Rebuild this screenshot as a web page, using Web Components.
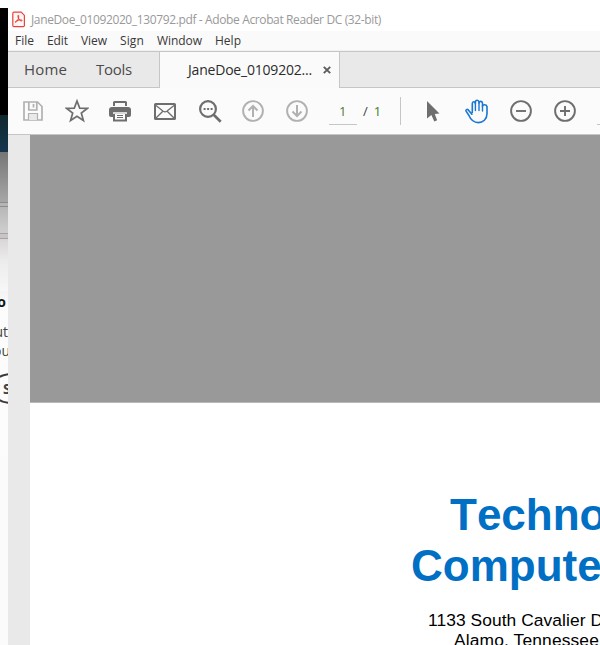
<!DOCTYPE html>
<html lang="en"><head><meta charset="utf-8"><title>Acrobat Reader</title>
<style>html,body{margin:0;height:645px;overflow:hidden;background:#fff}body{font-family:"Open Sans","Noto Sans",sans-serif}</style></head>
<body>
<reader-desktop></reader-desktop>
<script>
const define=(name,html,after)=>{
  const t=document.createElement('template');t.innerHTML=html;
  customElements.define(name,class extends HTMLElement{
    connectedCallback(){
      if(this.shadowRoot)return;
      this.attachShadow({mode:'open'}).append(t.content.cloneNode(true));
      if(after)after(this,this.shadowRoot);
    }
  });
};

/* One line of text tracked to a given advance width. */
define('fit-text',`<style>:host{display:block;white-space:pre;flex:none}span{display:inline-block}</style><span><slot></slot></span>`,(el,root)=>{
  const w=+el.getAttribute('w'),s=root.querySelector('span');
  el.style.width=w+'px';
  const n=el.textContent.length,natural=s.getBoundingClientRect().width;
  s.style.letterSpacing=((w-natural)/n)+'px';
});

const icons={
 pdf:`<svg width="14" height="18" viewBox="0 0 14 18" fill="none"><path d="M2 1.200h7.200l3.200 3.200v10.100q0 1.200-1.200 1.200H2Q.8 15.700.8 14.500V2.400Q.8 1.200 2 1.200z" fill="#fff6f5" stroke="#e9423a" stroke-width="1.200"/><path d="M6.400 4.200c-.8 0-.6 1.600.2 3.200.9 1.900 2.600 2.900 3.400 2.500.7-.5-.6-1.300-2.800-.9-2.200.2-4 1.300-3.900 2.100.3.900 1.900-.7 2.600-2.300.8-1.800 1.200-4.500.5-4.600z" stroke="#e8352c" stroke-width="1"/></svg>`,
 save:`<svg width="20" height="20" viewBox="0 0 20 20" fill="none" stroke="#b1b1b1" stroke-width="1.700"><path d="M1 1h13.500L19 5.500V19H1z"/><path d="M5.800 1v8h8V1M10.500 3v3.500"/><path d="M5.500 19v-6.500h9V19" fill="#e9e9e9" stroke-width="1.200"/></svg>`,
 star:`<svg width="24" height="24" viewBox="0 0 24 24" fill="none" stroke="#6e6e6e" stroke-width="1.700"><path d="M12 2l2.700 7.100 7.600.3-6 4.700 2.100 7.400L12 17.300l-6.400 4.200 2.100-7.400-6-4.700 7.600-.3z"/></svg>`,
 print:`<svg width="22" height="21" viewBox="0 0 22 21"><path d="M4 5V1.500Q4 0 5.500 0h11Q18 0 18 1.500V5h-2V2H6v3z" fill="#6e6e6e"/><path d="M3 6h16q3 0 3 3v5q0 2-2 2H2q-2 0-2-2V9q0-3 3-3z" fill="#6e6e6e"/><path d="M5 12h12v7.500H5z" fill="#fbfbfb" stroke="#6e6e6e" stroke-width="2"/><path d="M4 11h14v2H4z" fill="#d8d8d8"/><path d="M8 14.500h6M8 16.500h6" stroke="#6e6e6e"/></svg>`,
 mail:`<svg width="22" height="17" viewBox="0 0 22 17" fill="none" stroke="#6e6e6e"><rect x="1" y="1" width="20" height="15" rx=".6" stroke-width="2"/><path d="M2 2.500l7.200 5.800q1.800 1.200 3.600 0L20 2.500M2 15l6.600-6.500M20 15l-6.600-6.500" stroke-width="1.300"/></svg>`,
 find:`<svg width="23" height="23" viewBox="0 0 23 23" fill="none" stroke="#6e6e6e"><circle cx="9" cy="9" r="7.900" stroke-width="2.200"/><path d="M14.700 14.700l7 7" stroke-width="2.700"/><path d="M4.600 9h2m1.500 0h2m1.500 0h2" stroke-width="1.800"/></svg>`,
 up:`<svg width="22" height="22" viewBox="0 0 22 22" fill="none" stroke="#b1b1b1" stroke-width="1.900"><circle cx="11" cy="11" r="9.900"/><path d="M11 17V6M6.500 10.500L11 6l4.500 4.500" stroke-width="2"/></svg>`,
 down:`<svg width="22" height="22" viewBox="0 0 22 22" fill="none" stroke="#b1b1b1" stroke-width="1.900"><circle cx="11" cy="11" r="9.900"/><path d="M11 5v11M6.500 11.500L11 16l4.500-4.500" stroke-width="2"/></svg>`,
 arrow:`<svg width="13" height="21" viewBox="0 0 13 21" fill="#6e6e6e"><path d="M0 0l12.500 12.500-4.700.5 2.300 6.300-2.800 1.200-2.900-6.500L0 17.500z"/></svg>`,
 hand:`<svg width="24" height="25" viewBox="0 0 24 25" fill="none" stroke="#1976d2" stroke-width="1.600" stroke-linecap="round" stroke-linejoin="round"><path d="M7.300 13.500V4.500Q7.300 2.800 8.700 2.800T10.400 4.500V3Q10.400 1.200 12.100 1.200T14 3V4.100Q14 2.400 15.600 2.400T17.500 4.100V7.200Q17.500 5.800 19.500 5.800T22 7.500v7.300c0 5.400-4.100 8.800-8.700 8.800-5.500 0-8.100-4-9.500-7.300L1.100 12.100C.5 10.700 2.100 9.900 3.300 10.900l3.600 4.300"/><path d="M10.400 4.500V11.500M14 4v7.500M17.500 7v5" stroke-width="1.400"/></svg>`,
 minus:`<svg width="22" height="22" viewBox="0 0 22 22" fill="none" stroke="#6e6e6e" stroke-width="1.900"><circle cx="11" cy="11" r="9.900"/><path d="M6 11h10"/></svg>`,
 plus:`<svg width="22" height="22" viewBox="0 0 22 22" fill="none" stroke="#6e6e6e" stroke-width="1.900"><circle cx="11" cy="11" r="9.900"/><path d="M6 11h10M11 6v10"/></svg>`,
 close:`<svg width="8" height="8" viewBox="0 0 8 8" stroke="#5c5c5c" stroke-width="1.900"><path d="M.8.8l6.400 6.400M7.200.8L.8 7.200"/></svg>`
};
define('tool-icon',`<style>:host{display:flex;flex:none;align-items:center;justify-content:center}svg{display:block;flex:none}</style>`,(el,root)=>{
  root.append(document.createRange().createContextualFragment(icons[el.getAttribute('name')]));
});

define('title-bar',`<style>:host{display:flex;height:31px;box-sizing:border-box;padding:11px 0 0 4px;background:#fff;color:#999;font-size:12px;line-height:17px}tool-icon{width:14px;height:18px;margin-right:5px}</style>
<tool-icon name="pdf"></tool-icon><fit-text w="350">JaneDoe_01092020_130792.pdf - Adobe Acrobat Reader DC (32-bit)</fit-text>`);

define('menu-bar',`<style>:host{display:flex;height:20px;box-sizing:border-box;gap:13px;padding:1px 0 0 7px;background:#fafafa;border-bottom:1px solid #f0f0f0;color:#383838;font-size:12px;line-height:18px}</style>
<fit-text w="19">File</fit-text><fit-text w="21">Edit</fit-text><fit-text w="26">View</fit-text><fit-text w="24">Sign</fit-text><fit-text w="45">Window</fit-text><fit-text w="26">Help</fit-text>`);

define('tab-strip',`<style>:host{display:flex;height:37px;box-sizing:border-box;border-top:1px solid #c6c6c6;background:#e9e9e9;color:#4b4b4b;font-size:15px;line-height:34px}
.nav{display:flex;box-sizing:border-box;width:152px;padding-left:16px;gap:29px;border-right:1px solid #c6c6c6;border-bottom:1px solid #c6c6c6}
.tab{display:flex;box-sizing:border-box;width:180px;padding-left:28px;gap:11px;align-items:center;background:#fafafa;color:#2c2c2c;font-size:14px;border-right:1px solid #c6c6c6}
.rest{flex:1;border-bottom:1px solid #c6c6c6}</style>
<div class="nav"><fit-text w="43">Home</fit-text><fit-text w="36">Tools</fit-text></div>
<div class="tab"><fit-text w="124">JaneDoe_0109202...</fit-text><tool-icon name="close"></tool-icon></div><div class="rest"></div>`);

define('tool-bar',`<style>:host{display:flex;height:47px;box-sizing:border-box;padding-left:3px;background:#fbfbfb;border-bottom:1px solid #c6c6c6;overflow:hidden;color:#444;font-size:13px}
tool-icon{width:44px;height:46px}.page{display:flex;flex:none;width:74px;box-sizing:border-box;padding-left:10px}
.field{flex:none;box-sizing:border-box;width:28px;height:37px;padding:14px 0 0 10px;border-bottom:1px solid #c6c6c6;line-height:18px;color:#4f7a35}
.of{display:flex;gap:6px;flex:none;padding:14px 0 0 6px;line-height:18px}.of b{font-weight:400;color:#3d7a33}.rule{flex:none;width:1px;height:28px;margin:9px 10px 0 7px;background:#c6c6c6}
.zoom{flex:none;width:20px;height:37px;box-sizing:border-box;border-bottom:1px solid #c6c6c6;margin-left:10px}
[name=print]{margin:0 1px 0 -1px}[name=find]{margin:0 -1px 0 1px}[name=up]{margin-left:0}</style>
<tool-icon name="save"></tool-icon><tool-icon name="star"></tool-icon><tool-icon name="print"></tool-icon><tool-icon name="mail"></tool-icon><tool-icon name="find"></tool-icon><tool-icon name="up"></tool-icon><tool-icon name="down"></tool-icon>
<div class="page"><div class="field">1</div><div class="of"><span>/</span><b>1</b></div></div><div class="rule"></div>
<tool-icon name="arrow"></tool-icon><tool-icon name="hand"></tool-icon><tool-icon name="minus"></tool-icon><tool-icon name="plus"></tool-icon><div class="zoom"></div>`);

define('document-view',`<style>:host{display:grid;grid-template-columns:22px 1fr;height:510px;overflow:hidden;background:#e9e9e9}
.pane{display:flex;flex-direction:column;background:#999;padding-top:267px;overflow:hidden}
.page{flex:1;background:#fff;border-top:1px solid #b8b8b8;padding-top:86px;font-family:"Liberation Sans",Arial,sans-serif;color:#000}
h1{margin:0;font-size:44px;line-height:51px;color:#006fc4;white-space:pre;font-kerning:none}
h1 span{display:block}.a{padding-left:420px}.b{padding-left:381px}
address{font-style:normal;font-size:17.400px;line-height:20px;padding-top:19px;white-space:pre}
.c{padding-left:398px}.d{padding-left:424px}</style>
<div></div><div class="pane"><div class="page"><h1><span class="a">Techno</span><span class="b">Compute</span></h1><address><fit-text class="c" w="175">1133 South Cavalier D</fit-text><fit-text class="d" w="145">Alamo, Tennessee</fit-text></address></div></div>`);

/* Sliver of the browser window that shows behind the reader. */
define('window-behind',`<style>:host{display:block;width:8px;height:645px;overflow:hidden;background:#fff;padding-top:8px;box-sizing:border-box;color:#444}
.dark{height:107px;background:#000}.navy{height:37px;background:linear-gradient(#10292f,#153650)}
.fade{height:50px;background:linear-gradient(#767676,#a6a6a6)}.bar{height:3px;background:#b5b5b5;border:solid #8c8c8c;border-width:1px 0}
.mid{height:26px;background:linear-gradient(#b7b7b7,#cfcfcf)}.bar.two{height:4px;background:#c9c5c6;border-color:#a5a5a5}
.low{height:52px;background:linear-gradient(#d9d6d7,#ececec 22px,#f7f7f7)}
.text{height:356px;background:linear-gradient(#f3f3f3,#fcfcfc 20px,#fbfbfb);line-height:19px}
.text div{display:flex;justify-content:flex-end;white-space:pre}
.o{height:31px;font-size:14px;font-weight:700;color:#161616;line-height:22px;padding-right:2px}.text .u{font-size:14px;height:19px}.text .v{margin-right:-2px}
.text .btn{box-sizing:border-box;height:31px;width:60px;margin:13px 0 0 -9px;border:2px solid #3f393f;border-radius:20px/15px;font-size:14px;font-weight:700;line-height:27px;justify-content:flex-start;padding-left:10px}</style>
<div class="dark"></div><div class="navy"></div><div class="fade"></div><div class="bar"></div><div class="mid"></div><div class="bar two"></div><div class="low"></div>
<div class="text"><div class="o">o</div><div class="u">ut</div><div class="u v">ou</div><div class="btn">S</div></div>`);

define('reader-window',`<style>:host{display:flex;flex-direction:column;width:592px;height:645px;overflow:hidden}</style>
<title-bar></title-bar><menu-bar></menu-bar><tab-strip></tab-strip><tool-bar></tool-bar><document-view></document-view>`);
define('reader-desktop',`<style>:host{display:grid;grid-template-columns:8px 592px;width:600px;height:645px;overflow:hidden}</style><window-behind></window-behind><reader-window></reader-window>`);
</script></body></html>
